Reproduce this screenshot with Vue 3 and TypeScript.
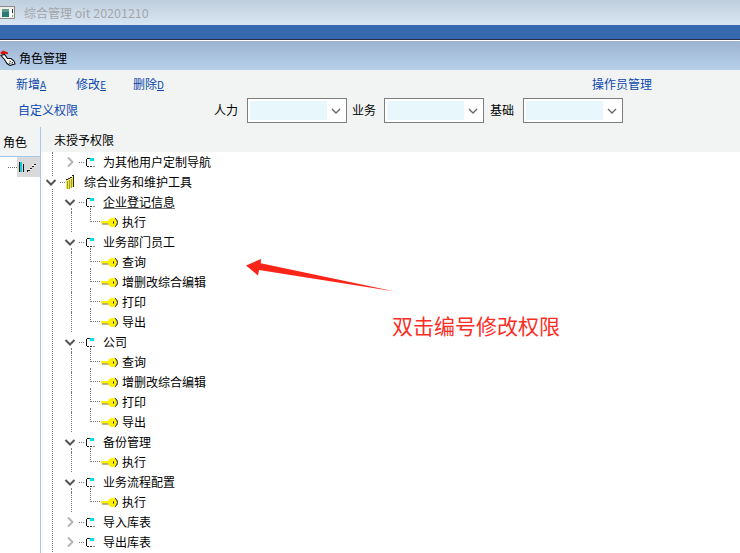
<template>
  <div class="window">
    <div class="titlebar">
      <svg class="app-icon" viewBox="0 0 15 13" width="15" height="13" shape-rendering="crispEdges">
        <rect x="-1" y="0.5" width="15.5" height="12" fill="#efefea" stroke="#8a8a8a" stroke-width="1" />
        <rect x="2" y="3" width="7" height="3" fill="#5f9c8f" />
        <rect x="2" y="6" width="7" height="5" fill="#2a7a78" />
        <rect x="9" y="3" width="3" height="8" fill="#fff" />
        <rect x="12" y="3" width="1" height="4" fill="#333" />
        <rect x="12" y="9" width="1" height="2" fill="#7cb342" />
      </svg>
      <span class="app-title">综合管理 <span class="latin">oit 20201210</span></span>
    </div>
    <div class="bluebar"></div>

    <div class="pagehead">
      <svg class="hand" viewBox="0 0 16 16" width="16" height="16">
        <path d="M0 3 L3 0.5 L8 2.5 L8 4 L2 4.5 Z" fill="#d81818" />
        <path d="M1 5.5 L4.5 4.5 L7.5 8.5 L11 8.5 L14 11 L15 14 L10 15.5 L7 13.5 L4.5 9.5 Z" fill="#fff" stroke="#111" stroke-width="1.1" />
        <path d="M9.5 11 L13 13 M9 13 L13 14.5" stroke="#111" stroke-width="1" stroke-dasharray="1.5 1" fill="none" />
      </svg>
      <span>角色管理</span>
    </div>

    <div class="toolbar">
      <div class="tool-row first">
        <a class="link act">新增<u>A</u></a>
        <a class="link act">修改<u>E</u></a>
        <a class="link act last">删除<u>D</u></a>
        <a class="link operators">操作员管理</a>
      </div>
      <div class="tool-row second">
        <a class="link custom">自定义权限</a>
        <div v-for="f in fields" :key="f" class="field">
          <label>{{ f }}</label>
          <div class="select">
            <div class="select-value"></div>
            <svg viewBox="0 0 10 6" width="10" height="6">
              <path d="M1 1 L5 5 L9 1" fill="none" stroke="#666" stroke-width="1.3" />
            </svg>
          </div>
        </div>
      </div>
    </div>

    <div class="content">
      <div class="roles">
        <div class="roles-head">角色</div>
        <div class="role-row">
          <span class="role-dots"></span>
          <div class="role-item">
            <svg viewBox="0 0 23 20" width="23" height="20" shape-rendering="crispEdges">
              <rect x="2" y="5" width="1" height="10" fill="#111" />
              <rect x="3" y="5" width="2" height="10" fill="#12c9d6" />
              <rect x="6" y="7" width="1" height="8" fill="#111" />
              <path d="M8 15h2v-2h3v-2h2v-2h2v-2h2v2h-2v1h-2v2h-2v2h-2v1h-3z" fill="#1a1a1a" />
              <rect x="12" y="12" width="3" height="1" fill="#fff" />
              <rect x="15" y="8" width="4" height="1" fill="#fff" />
            </svg>
          </div>
        </div>
      </div>

      <div class="perms">
        <div class="perms-head">未授予权限</div>
        <div class="tree">
          <div class="trunk"></div>
          <div
            v-for="(row, i) in rows"
            :key="i"
            class="tree-row"
            :class="['lv' + row.level]"
          >
            <template v-if="row.level < 2">
              <svg class="chev" viewBox="0 0 12 12" width="12" height="12">
                <path v-if="row.open" d="M1.5 4 L6 8.5 L10.5 4" fill="none" stroke="#555" stroke-width="2" />
                <path v-else d="M4 1.5 L8.5 6 L4 10.5" fill="none" stroke="#b5b5b5" stroke-width="2" />
              </svg>
              <span class="dots"></span>
              <svg v-if="row.level === 0" class="books" viewBox="0 0 10 16" width="10" height="16" shape-rendering="crispEdges">
                <path d="M1 6h1v9h-1zM3 5h1v10h-1zM5 4h1v10h-1zM7 3h1v10h-1z" fill="#f4ea10" />
                <path d="M1 5h2v1h-2zM3 4h2v1h-2zM5 3h2v1h-2zM7 1h2v1h-2zM8 2h1v11h-1z" fill="#222" />
                <path d="M2 7h1v8h-1zM4 6h1v9h-1zM6 5h1v9h-1z" fill="#9a9a70" />
              </svg>
              <svg v-else class="module" viewBox="0 0 10 11" width="10" height="11" shape-rendering="crispEdges">
                <path d="M1 2h1v-1h2v1h-2v7h2v1h-2v-1h-1z" fill="#111" />
                <rect x="4" y="1" width="1" height="1" fill="#333" />
                <rect x="5" y="1" width="4" height="3" fill="#00e0ea" />
                <rect x="5" y="9" width="2" height="1" fill="#333" />
                <rect x="8" y="9" width="2" height="1" fill="#888" />
              </svg>
            </template>
            <template v-else>
              <span class="hook"></span>
              <svg class="key" viewBox="0 0 17 11" width="17" height="11">
                <rect x="0" y="4" width="10" height="2.5" fill="#ffef00" />
                <rect x="1" y="6.5" width="8" height="1" fill="#77702a" />
                <circle cx="11.5" cy="5.5" r="4.6" fill="#ffef00" />
                <path d="M13.8 1.2 A4.8 4.8 0 0 1 13.8 9.8" fill="none" stroke="#111" stroke-width="1" />
                <rect x="12" y="4.5" width="1" height="2" fill="#111" />
              </svg>
            </template>
            <span class="label" :class="{ marked: row.marked }">{{ row.text }}</span>
          </div>
        </div>
      </div>

      <svg class="arrow" viewBox="0 0 160 40" width="160" height="40">
        <path d="M1 10.5 L16 4 L15.7 8.3 L150 36.5 L14 15 L13 20.5 Z" fill="#fb2418" />
      </svg>
      <div class="note">双击编号修改权限</div>
    </div>
  </div>
</template>

<script setup lang="ts">
interface Row {
  text: string
  level: number
  open?: boolean
  marked?: boolean
}

const fields = ['人力', '业务', '基础']

const leaf = (text: string): Row => ({ text, level: 2 })

const rows: Row[] = [
  { text: '为其他用户定制导航', level: 1 },
  { text: '综合业务和维护工具', level: 0, open: true },
  { text: '企业登记信息', level: 1, open: true, marked: true },
  leaf('执行'),
  { text: '业务部门员工', level: 1, open: true },
  leaf('查询'),
  leaf('增删改综合编辑'),
  leaf('打印'),
  leaf('导出'),
  { text: '公司', level: 1, open: true },
  leaf('查询'),
  leaf('增删改综合编辑'),
  leaf('打印'),
  leaf('导出'),
  { text: '备份管理', level: 1, open: true },
  leaf('执行'),
  { text: '业务流程配置', level: 1, open: true },
  leaf('执行'),
  { text: '导入库表', level: 1 },
  { text: '导出库表', level: 1 }
]
</script>

<style>
html,
body {
  margin: 0;
  background: #fff;
  overflow: hidden;
}
</style>

<style scoped>
.window {
  width: 740px;
  height: 553px;
  overflow: hidden;
  display: flex;
  flex-direction: column;
  font-family: "Noto Sans CJK SC", "Liberation Sans", sans-serif;
  font-size: 12px;
  color: #000;
}

.titlebar {
  height: 25px;
  flex: none;
  display: flex;
  align-items: center;
  background: linear-gradient(#bfcedc, #d9e6f4);
}

.app-icon {
  margin-right: 9px;
}

.app-title {
  color: #a3a6aa;
  font-size: 12px;
}

.app-title .latin {
  font-size: 12.5px;
}

.bluebar {
  height: 14px;
  flex: none;
  background: #3769b1;
  border-bottom: 1px solid #22304a;
  box-shadow: 0 1px 0 #fff;
}

.pagehead {
  height: 29px;
  margin-top: 1px;
  flex: none;
  box-sizing: border-box;
  display: flex;
  align-items: center;
  gap: 3px;
  padding-top: 4px;
  background: linear-gradient(#9bb3d1, #b7d0ea);
}

.toolbar {
  height: 57px;
  flex: none;
  background: #f2f4f3;
}

.tool-row {
  display: flex;
  align-items: center;
}

.tool-row.first {
  height: 28px;
  padding-left: 16px;
  gap: 30px;
}

.tool-row.second {
  height: 25px;
  padding-left: 18px;
}

.link {
  color: #0b48ad;
  white-space: nowrap;
}

.first .link,
.second .link,
.field label {
  margin-top: -2px;
}

.act u {
  font-size: 10px;
}

.act.last {
  margin-left: -3px;
}

.operators {
  margin-left: 398px;
}

.custom {
  width: 60px;
  margin-right: 136px;
}

.field {
  display: flex;
  align-items: center;
  gap: 9px;
}

.field + .field {
  margin-left: 5px;
}

.field:nth-child(3) label {
  margin-right: -1px;
}

.field:last-child {
  margin-left: 6px;
}

.select {
  width: 100px;
  height: 25px;
  box-sizing: border-box;
  border: 1px solid #7d7d7d;
  background: #fff;
  display: flex;
  align-items: center;
  padding: 2px 5px 2px 2px;
  justify-content: space-between;
}

.select-value {
  width: 77px;
  height: 19px;
  background: #e8f7fb;
}

.content {
  position: relative;
  flex: 1;
  min-height: 0;
  display: flex;
  background: #fff;
}

.roles {
  width: 41px;
  flex: none;
  box-sizing: border-box;
  border-right: 1px solid #a3c8ee;
}

.roles-head {
  height: 30px;
  box-sizing: border-box;
  padding: 6px 0 0 3px;
  background: #f2f4f3;
  border-bottom: 1px solid #a3c8ee;
}

.role-row {
  display: flex;
  align-items: center;
  padding-left: 8px;
  height: 20px;
}

.role-dots {
  width: 9px;
  border-top: 1px dotted #666;
}

.role-item {
  width: 23px;
  height: 20px;
  background: #d9d9d9;
}

.role-item svg {
  display: block;
}

.perms {
  flex: 1;
  min-width: 0;
}

.perms-head {
  height: 25px;
  box-sizing: border-box;
  padding: 4px 0 0 13px;
  background: #f2f4f3;
}

.tree {
  position: relative;
}

.trunk {
  position: absolute;
  left: 11px;
  top: 0;
  bottom: -20px;
  border-left: 1px dotted #777;
}

.tree-row {
  position: relative;
  height: 20px;
  display: flex;
  align-items: center;
}

.label {
  margin-top: -2px;
}

.chev {
  flex: none;
  position: relative;
  background: #fff;
}

.dots {
  width: 5px;
  flex: none;
  margin: 0 1px 0 3px;
  border-top: 1px dotted #777;
}

.lv0 {
  padding-left: 4px;
}

.lv0 .books {
  margin-left: -1px;
  margin-right: 9px;
}

.lv1 {
  padding-left: 23px;
}

.lv1::before {
  content: "";
  position: absolute;
  left: 30px;
  top: 16px;
  height: 20px;
  border-left: 1px dotted #777;
}

.lv1:nth-child(2)::before,
.lv1:nth-last-child(-n + 2)::before {
  display: none;
}

.lv1 .module {
  margin-right: 8px;
}

.lv2 {
  padding-left: 49px;
}

.lv2::before {
  content: "";
  position: absolute;
  left: 30px;
  top: 0;
  height: 20px;
  border-left: 1px dotted #777;
}

.hook {
  position: relative;
  width: 10px;
  height: 1px;
  flex: none;
  border-top: 1px dotted #777;
}

.hook::before {
  content: "";
  position: absolute;
  left: 0;
  top: -14px;
  height: 14px;
  border-left: 1px dotted #777;
}

.key {
  flex: none;
  margin-left: 1px;
  margin-right: 4px;
}

.marked {
  text-decoration: underline;
  text-decoration-color: #777;
  text-underline-offset: 1px;
}

.arrow {
  position: absolute;
  left: 245px;
  top: 128px;
}

.note {
  position: absolute;
  left: 392px;
  top: 182px;
  font-size: 21px;
  line-height: 32px;
  color: #fb2e26;
  white-space: nowrap;
}
</style>
